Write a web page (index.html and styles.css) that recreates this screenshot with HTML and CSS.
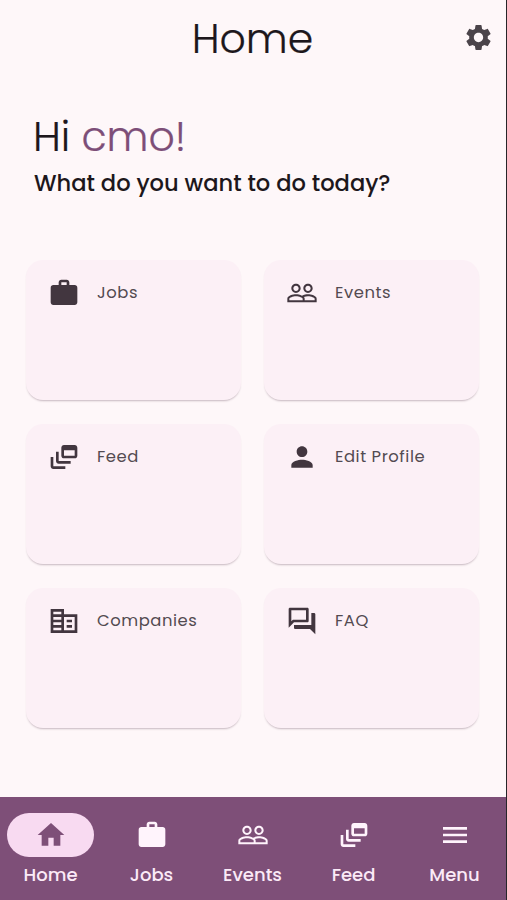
FILE: index.html
```
<!DOCTYPE html>
<html lang="en">
<head>
    <meta charset="utf-8">
    <title>Home</title>
    <link rel="stylesheet" href="styles.css">
</head>
<body>
    <svg class="icon-defs">
        <symbol id="settings" viewBox="0 0 24 24"><path d="M19.14 12.94c.04-.3.06-.61.06-.94 0-.32-.02-.64-.07-.94l2.03-1.58c.18-.14.23-.41.12-.61l-1.92-3.32c-.12-.22-.37-.29-.59-.22l-2.39.96c-.5-.38-1.03-.7-1.62-.94l-.36-2.54c-.04-.24-.24-.41-.48-.41h-3.84c-.24 0-.43.17-.47.41l-.36 2.54c-.59.24-1.13.57-1.62.94l-2.39-.96c-.22-.08-.47 0-.59.22L2.74 8.87c-.12.21-.08.47.12.61l2.03 1.58c-.05.3-.09.63-.09.94s.02.64.07.94l-2.03 1.58c-.18.14-.23.41-.12.61l1.92 3.32c.12.22.37.29.59.22l2.39-.96c.5.38 1.03.7 1.62.94l.36 2.54c.05.24.24.41.48.41h3.84c.24 0 .44-.17.47-.41l.36-2.54c.59-.24 1.13-.56 1.62-.94l2.39.96c.22.08.47 0 .59-.22l1.92-3.32c.12-.22.07-.47-.12-.61l-2.01-1.58zM12 15.6c-1.98 0-3.6-1.62-3.6-3.6s1.62-3.6 3.6-3.6 3.6 1.62 3.6 3.6-1.62 3.6-3.6 3.6z"/></symbol>
        <symbol id="work" viewBox="0 0 24 24"><path d="M20 6h-4V4c0-1.11-.89-2-2-2h-4c-1.11 0-2 .89-2 2v2H4c-1.11 0-1.99.89-1.99 2L2 19c0 1.11.89 2 2 2h16c1.11 0 2-.89 2-2V8c0-1.11-.89-2-2-2zm-6 0h-4V4h4v2z"/></symbol>
        <symbol id="people" viewBox="0 0 24 24"><path d="M16.5 13c-1.2 0-3.07.34-4.5 1-1.43-.67-3.3-1-4.5-1C5.33 13 1 14.08 1 16.25V19h22v-2.75c0-2.17-4.33-3.25-6.5-3.25zm-4 4.5h-10v-1.25c0-.54 2.56-1.75 5-1.75s5 1.21 5 1.75v1.25zm9 0H14v-1.25c0-.46-.2-.86-.52-1.22.88-.3 1.96-.53 3.02-.53 2.44 0 5 1.21 5 1.75v1.25zM7.5 12c1.93 0 3.5-1.57 3.5-3.5S9.43 5 7.5 5 4 6.57 4 8.5 5.57 12 7.5 12zm0-5.5c1.1 0 2 .9 2 2s-.9 2-2 2-2-.9-2-2 .9-2 2-2zM16.5 12c1.93 0 3.5-1.57 3.5-3.5S18.43 5 16.5 5 13 6.57 13 8.5s1.57 3.5 3.5 3.5zm0-5.5c1.1 0 2 .9 2 2s-.9 2-2 2-2-.9-2-2 .9-2 2-2z"/></symbol>
        <symbol id="feed" viewBox="0 0 24 24"><path d="M8 8H6v7c0 1.1.9 2 2 2h9v-2H8V8zM20 3h-8c-1.1 0-2 .9-2 2v6c0 1.1.9 2 2 2h8c1.1 0 2-.9 2-2V5c0-1.1-.9-2-2-2zm0 8h-8V7h8v4zM4 12H2v7c0 1.1.9 2 2 2h9v-2H4v-7z"/></symbol>
        <symbol id="person" viewBox="0 0 24 24"><path d="M12 12c2.21 0 4-1.79 4-4s-1.79-4-4-4-4 1.79-4 4 1.79 4 4 4zm0 2c-2.67 0-8 1.34-8 4v2h16v-2c0-2.66-5.33-4-8-4z"/></symbol>
        <symbol id="company" viewBox="0 0 24 24"><path d="M12 7V3H2v18h20V7H12zm-2 12H4v-2h6v2zm0-4H4v-2h6v2zm0-4H4V9h6v2zm0-4H4V5h6v2zm10 12h-8V9h8v10zm-2-8h-4v2h4v-2zm0 4h-4v2h4v-2z"/></symbol>
        <symbol id="faq" viewBox="0 0 24 24"><path d="M15 4v7H5.17L4 12.17V4h11m1-2H3c-.55 0-1 .45-1 1v14l4-4h10c.55 0 1-.45 1-1V3c0-.55-.45-1-1-1zm5 4h-2v9H6v2c0 .55.45 1 1 1h11l4 4V7c0-.55-.45-1-1-1z"/></symbol>
        <symbol id="home" viewBox="0 0 24 24"><path d="M10 20v-6h4v6h5v-8h3L12 3 2 12h3v8z"/></symbol>
        <symbol id="menu" viewBox="0 0 24 24"><path d="M3 18h18v-2H3v2zm0-5h18v-2H3v2zm0-7v2h18V6H3z"/></symbol>
    </svg>

    <div class="app">
        <header class="top-bar">
            <h1>Home</h1>
            <svg class="settings-icon"><use href="#settings"/></svg>
        </header>

        <main class="content">
            <h2 class="greeting">Hi <span class="user-name">cmo!</span></h2>
            <p class="question">What do you want to do today?</p>

            <div class="cards">
                <div class="card"><svg class="icon"><use href="#work"/></svg><span>Jobs</span></div>
                <div class="card"><svg class="icon"><use href="#people"/></svg><span>Events</span></div>
                <div class="card"><svg class="icon"><use href="#feed"/></svg><span>Feed</span></div>
                <div class="card"><svg class="icon"><use href="#person"/></svg><span>Edit Profile</span></div>
                <div class="card"><svg class="icon"><use href="#company"/></svg><span>Companies</span></div>
                <div class="card"><svg class="icon"><use href="#faq"/></svg><span>FAQ</span></div>
            </div>
        </main>

        <nav class="bottom-nav">
            <a class="nav-item active"><span class="pill"><svg class="icon"><use href="#home"/></svg></span>Home</a>
            <a class="nav-item"><span class="pill"><svg class="icon"><use href="#work"/></svg></span>Jobs</a>
            <a class="nav-item"><span class="pill"><svg class="icon"><use href="#people"/></svg></span>Events</a>
            <a class="nav-item"><span class="pill"><svg class="icon"><use href="#feed"/></svg></span>Feed</a>
            <a class="nav-item"><span class="pill"><svg class="icon"><use href="#menu"/></svg></span>Menu</a>
        </nav>
    </div>
</body>
</html>
```
FILE: styles.css
```
* {
    box-sizing: border-box;
}

body {
    margin: 0;
    font-family: Poppins, Inter, "Liberation Sans", sans-serif;
    color: #1d171c;
    background-color: #fef7f9;
}

.icon-defs {
    display: none;
}

.app {
    display: flex;
    flex-direction: column;
    height: 900px;
    border-right: 1px solid #272529;
}

.top-bar {
    display: grid;
    grid-template-columns: 1fr auto 1fr;
    align-items: center;
    height: 76px;
    padding: 0 12px 0 11px;
}

.top-bar h1 {
    grid-column: 2;
    margin: 0;
    font-size: 41px;
    font-weight: 300;
    -webkit-text-stroke: 0.2px;
}

.settings-icon {
    justify-self: end;
    width: 31px;
    height: 31px;
    margin-bottom: 1px;
    fill: #4b444a;
}

.content {
    flex: 1;
    padding: 37px 27px 0 26px;
}

.greeting {
    margin: 0;
    padding-left: 7px;
    font-size: 41px;
    font-weight: 300;
    line-height: 48px;
    -webkit-text-stroke: 0.2px;
}

.user-name {
    color: #7d4e78;
}

.question {
    margin: 8px 0 0;
    padding-left: 8px;
    font-size: 22.6px;
    font-weight: 500;
    line-height: 28px;
}

.cards {
    display: grid;
    grid-template-columns: 1fr 1fr;
    gap: 24px 23px;
    margin-top: 63px;
}

.card {
    display: flex;
    align-items: flex-start;
    gap: 17px;
    height: 140px;
    padding: 17px 22px;
    border-radius: 17px;
    background-color: #fcf0f6;
    box-shadow: 0 2px 2px -1px rgba(70, 40, 60, 0.3);
    color: #534b51;
    font-size: 16.4px;
    line-height: 32px;
    letter-spacing: 0.55px;
}

.icon {
    width: 32px;
    height: 32px;
    flex: none;
    fill: #42363f;
}

.bottom-nav {
    display: flex;
    height: 103px;
    padding: 16px 1px 0 0;
    background-color: #7e4f78;
}

.nav-item {
    flex: 1;
    display: flex;
    flex-direction: column;
    align-items: center;
    gap: 5px;
    color: #fbeaf7;
    font-size: 18px;
    font-weight: 500;
    line-height: 26px;
}

.pill {
    display: flex;
    align-items: center;
    justify-content: center;
    width: 87px;
    height: 44px;
    border-radius: 22px;
}

.nav-item .icon {
    fill: #fff4fc;
}

.active .pill {
    background-color: #f8daf1;
}

.active .icon {
    fill: #7e4f78;
}
```
